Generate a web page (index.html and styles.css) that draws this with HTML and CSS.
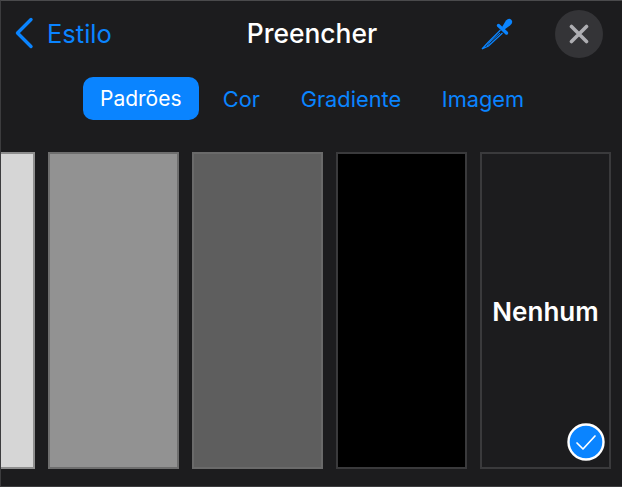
FILE: index.html
```html
<!DOCTYPE html>
<html lang="pt">
<head>
    <meta charset="UTF-8">
    <meta name="viewport" content="width=device-width, initial-scale=1.0">
    <title>Preencher</title>
    <link rel="stylesheet" href="styles.css">
</head>
<body>
<div class="panel">
    <header class="topbar">
        <a class="back" href="#">
            <svg class="back-icon" width="20" height="32" viewBox="0 0 20 32"><path d="M17 2.500 L3.500 16 L17 29.500" fill="none" stroke="#0a84ff" stroke-width="3.400" stroke-linecap="round" stroke-linejoin="round"/></svg>
            <span>Estilo</span>
        </a>
        <h1 class="title">Preencher</h1>
        <svg class="picker" width="34" height="34" viewBox="0 0 34 34">
            <path d="M22 10 L26 3.500 Q29 .5 31.500 3 Q33.500 5.500 30 8.500 L24.500 12.500Z" fill="#0a84ff"/>
            <path d="M18.500 8.500 L26.500 16" stroke="#0a84ff" stroke-width="3.400" stroke-linecap="round"/>
            <path d="M20.500 13 L8 25.500 L2 32 L8.500 29 L22.500 16" fill="none" stroke="#0a84ff" stroke-width="1.300"/>
            <path d="M20 16 L10 25 L7 29" fill="none" stroke="#0a84ff" stroke-width="1"/>
        </svg>
        <button class="close">
            <svg width="20" height="20" viewBox="0 0 20 20"><path d="M2.500 2.500 L17.500 17.500 M17.500 2.500 L2.500 17.500" stroke="#aeaeb2" stroke-width="3.600" stroke-linecap="round"/></svg>
        </button>
    </header>
    <nav class="tabs">
        <a class="tab tab-active" href="#">Padrões</a>
        <a class="tab" href="#">Cor</a>
        <a class="tab" href="#">Gradiente</a>
        <a class="tab" href="#">Imagem</a>
    </nav>
    <div class="swatches">
        <div class="swatch swatch-light"></div>
        <div class="swatch swatch-mid"></div>
        <div class="swatch swatch-dark"></div>
        <div class="swatch swatch-black"></div>
        <div class="swatch swatch-none">
            Nenhum
            <svg class="check" width="38" height="38" viewBox="0 0 38 38">
                <circle cx="19" cy="19" r="17.500" fill="#0a84ff" stroke="#fff" stroke-width="2.400"/>
                <path d="M10 20 L16 26 L28 13" fill="none" stroke="#fff" stroke-width="1.700" stroke-linecap="round" stroke-linejoin="round"/>
            </svg>
        </div>
    </div>
</div>
</body>
</html>
```

FILE: styles.css
```css
body {
    margin: 0;
    background-color: #1c1c1e;
    font-family: Inter, "Liberation Sans", sans-serif;
}
a {
    text-decoration: none;
}
.panel {
    box-sizing: border-box;
    width: 622px;
    height: 487px;
    overflow: hidden;
    background-color: #1c1c1e;
    border-top: 1px solid #4a4a4c;
    border-left: 1px solid #3c3c3e;
    border-bottom: 1px solid #3c3c3e;
}
.topbar {
    display: flex;
    align-items: center;
    height: 60px;
    padding: 4px 18px 0 13px;
    box-sizing: border-box;
}
.back {
    display: flex;
    align-items: center;
    gap: 13px;
    color: #0a84ff;
    font-size: 25.5px;
    width: 200px;
}
.title {
    margin: 0;
    width: 196px;
    color: #fff;
    font-size: 26.4px;
    font-weight: 500;
    text-align: center;
}
.picker {
    margin-left: 70px;
    margin-right: 41px;
    margin-top: 1px;
}
.close {
    display: flex;
    align-items: center;
    justify-content: center;
    width: 48px;
    height: 48px;
    margin-top: 2px;
    padding: 0;
    border: 0;
    border-radius: 50%;
    background-color: #343437;
}
.tabs {
    display: flex;
    align-items: center;
    height: 44px;
    margin-top: 15px;
    padding-left: 82px;
}
.tab {
    color: #0a84ff;
    font-size: 21.8px;
    padding: 1px 20.3px 0;
    line-height: 42px;
}
.tab-active {
    background-color: #0a84ff;
    color: #fff;
    border-radius: 10px;
    font-size: 21px;
    padding: 1px 17px 0;
    margin-right: 4px;
}
.swatches {
    display: flex;
    justify-content: flex-end;
    gap: 13px;
    margin-top: 32px;
    padding-right: 11px;
}
.swatch {
    flex: 0 0 131px;
    height: 317px;
    box-sizing: border-box;
    border: 2px solid #000;
}
.swatch-light {
    background-color: #d6d6d6;
    border-color: #8e8e8e;
}
.swatch-mid {
    background-color: #929292;
    border-color: #6e6e6e;
}
.swatch-dark {
    background-color: #5e5e5e;
    border-color: #6a6a6a;
}
.swatch-black {
    background-color: #000;
    border-color: #3a3a3c;
}
.swatch-none {
    position: relative;
    display: flex;
    align-items: center;
    justify-content: center;
    padding-top: 2px;
    border-color: #3a3a3c;
    color: #fff;
    font-size: 26px;
    font-weight: 600;
}
.check {
    position: absolute;
    right: 4px;
    bottom: 6px;
}
```
